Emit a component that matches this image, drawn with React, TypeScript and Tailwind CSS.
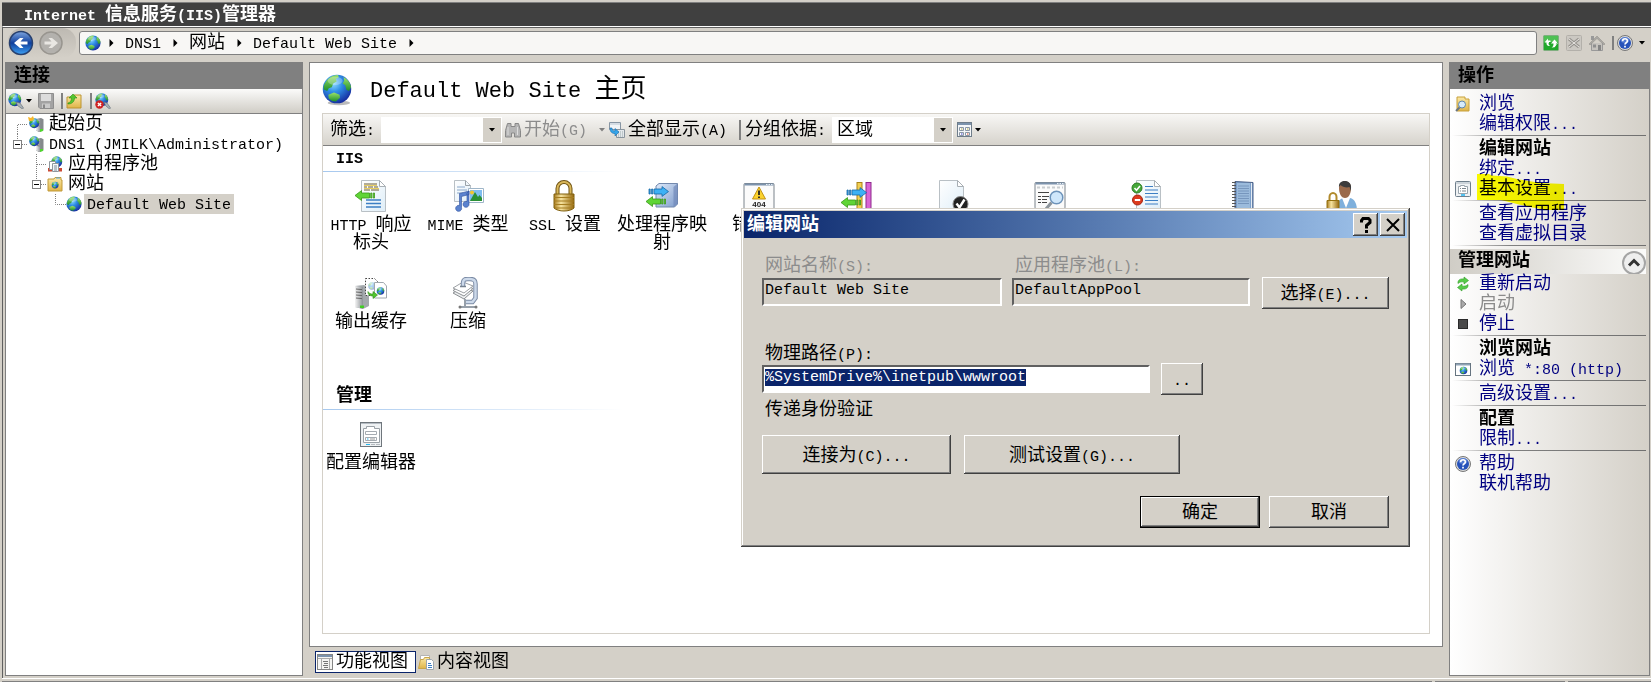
import { useEffect, useRef } from "react";
import type { ReactNode } from "react";

// Latin runs are set smaller than the Chinese so that two letters take one ideograph
function T({ children, big }: { children: string; big?: boolean }) {
  const parts = children.split(/([\x20-\x7e]+)/).filter(Boolean);
  return (
    <>
      {parts.map((p, i) =>
        /^[\x20-\x7e]/.test(p) ? (
          <span key={i} className={big ? "text-[22px] leading-none" : "text-[15px] leading-none"}>{p}</span>
        ) : (
          p
        )
      )}
    </>
  );
}

function Defs() {
  return (
    <svg className="absolute size-0" aria-hidden="true">
      <defs>
        <radialGradient id="sea" cx="0.38" cy="0.3" r="0.75">
          <stop offset="0" stopColor="#8fdcff" />
          <stop offset="0.4" stopColor="#2f8fe6" />
          <stop offset="1" stopColor="#14279b" />
        </radialGradient>
        <linearGradient id="land" x1="0" y1="0" x2="0" y2="1">
          <stop offset="0" stopColor="#9be36a" />
          <stop offset="1" stopColor="#1e8f2c" />
        </linearGradient>
        <linearGradient id="gold" x1="0" y1="0" x2="1" y2="0">
          <stop offset="0" stopColor="#a77a1c" />
          <stop offset="0.35" stopColor="#f7e4a0" />
          <stop offset="1" stopColor="#96690f" />
        </linearGradient>
        <linearGradient id="paper" x1="0" y1="0" x2="1" y2="1">
          <stop offset="0" stopColor="#ffffff" />
          <stop offset="1" stopColor="#dfeef8" />
        </linearGradient>
        <linearGradient id="navy" x1="0" y1="0" x2="0" y2="1">
          <stop offset="0" stopColor="#7fa6e0" />
          <stop offset="0.5" stopColor="#0f3f9c" />
          <stop offset="1" stopColor="#3ea2f5" />
        </linearGradient>
        <linearGradient id="steel" x1="0" y1="0" x2="1" y2="0">
          <stop offset="0" stopColor="#f4f4f4" />
          <stop offset="1" stopColor="#8d9296" />
        </linearGradient>
        <linearGradient id="glass" x1="0" y1="0" x2="1" y2="1">
          <stop offset="0" stopColor="#dfeafa" />
          <stop offset="1" stopColor="#7f9ccb" />
        </linearGradient>
        <linearGradient id="folder" x1="0" y1="0" x2="0" y2="1">
          <stop offset="0" stopColor="#fbe9a6" />
          <stop offset="1" stopColor="#dfb447" />
        </linearGradient>
      </defs>
    </svg>
  );
}

function GlobeShape({ x = 0, y = 0, s = 1 }: { x?: number; y?: number; s?: number }) {
  return (
    <g transform={`translate(${x} ${y}) scale(${s})`}>
      <circle cx="8" cy="8" r="7.6" fill="url(#sea)" />
      <path d="M2 4.2C3.6 1.8 6 .6 8.400 .5L9 1.600 7.400 2.600 7.800 4 6 5 5.200 7 3.600 7.600 2.800 9 1 8.200C.6 6.800 1.100 5.400 2 4.200Z" fill="url(#land)" />
      <path d="M11.500 1.600C13.600 2.800 15.200 4.600 15.500 7L14.400 9 13 8.400 12.400 6 11 5 11.800 3.600Z" fill="url(#land)" />
      <path d="M3.400 11 6.400 9.800 9.400 11 9.600 12.600 7.400 14.600 5.400 14.400 3.600 13Z" fill="url(#land)" />
      <ellipse cx="7" cy="3.600" rx="4" ry="2.200" fill="#fff" opacity="0.28" />
    </g>
  );
}

function Svg({ size = 16, children }: { size?: 16 | 32; children: ReactNode }) {
  return (
    <svg viewBox={`0 0 ${size} ${size}`} className={size === 16 ? "size-4 shrink-0" : "size-8 shrink-0"} aria-hidden="true">
      {children}
    </svg>
  );
}

const Globe = () => <Svg><GlobeShape /></Svg>;

function Caret({ dim }: { dim?: boolean }) {
  return (
    <svg viewBox="0 0 6 4" className="h-1 w-1.5 shrink-0" aria-hidden="true">
      <path d="M0 0h6L3 3.500Z" fill={dim ? "#808080" : "#000"} />
    </svg>
  );
}

function ServerShape() {
  return (
    <g>
      <path d="M8 3l5-1 2.500 1.200v11.300L11 16 8 14.600Z" fill="#85898c" />
      <path d="M8 3l4.400.8V16L8 14.600Z" fill="url(#steel)" />
      <path d="M8.800 5.500l2.800.5M8.800 7.500l2.800.5M8.800 9.500l2.800.5" stroke="#666" strokeWidth="0.800" />
      <path d="M12 13h3v2l-3 1Z" fill="#4fd52c" />
    </g>
  );
}

function StartIcon() {
  return (
    <Svg>
      <ServerShape />
      <GlobeShape x={1} y={2} s={0.65} />
      <path d="M0 1l3 1 2-2 1 3-2 2H1Z" fill="#f7b62a" />
    </Svg>
  );
}

function ServerIcon() {
  return (
    <Svg>
      <ServerShape />
      <GlobeShape x={1} y={0} s={0.65} />
    </Svg>
  );
}

function PoolIcon() {
  return (
    <Svg>
      <GlobeShape x={4} y={0} s={0.72} />
      <path d="M1 12h4v3.500H1zM12 12h3v3.500h-3z" fill="#c94a35" />
      <path d="M2.500 5.500h6v8h-6z" fill="#fff" stroke="#8f979d" />
      <path d="M5.500 7.500h6v8h-6z" fill="#f4f7fa" stroke="#8f979d" />
      <path d="M7 10h3M7 12h3M7 14h3" stroke="#7b8a99" />
    </Svg>
  );
}

function SitesIcon() {
  return (
    <Svg>
      <path d="M1 3h6l1-1.500h6V4h1v11H1Z" fill="url(#folder)" stroke="#c19a3b" />
      <path d="M9 2h4" stroke="#58a6dc" />
      <GlobeShape x={4.500} y={5.500} s={0.45} />
    </Svg>
  );
}

function ConnectIcon() {
  return (
    <Svg>
      <GlobeShape s={0.85} />
      <path d="M8 9l4 1 3.500 5-1 1-5-3.500Z" fill="#a9b2b8" stroke="#69737b" strokeWidth="0.700" />
    </Svg>
  );
}

function DisconnectIcon() {
  return (
    <Svg>
      <GlobeShape s={0.85} />
      <path d="M9 9l3 1 3.500 5-1 1-4-3.500Z" fill="#a9b2b8" stroke="#69737b" strokeWidth="0.700" />
      <circle cx="4.500" cy="11.500" r="4.200" fill="#cf2222" />
      <path d="M2.900 9.900l3.200 3.200M6.100 9.900l-3.200 3.200" stroke="#fff" strokeWidth="1.400" />
    </Svg>
  );
}

function SaveIcon() {
  return (
    <Svg>
      <path d="M.5.5h15v15H2l-1.500-1.500Z" fill="#a3a3a3" stroke="#8e8e8e" />
      <path d="M3 1h10v7H3z" fill="#dcdcdc" />
      <path d="M4 10.500h8V15H4z" fill="#c9c9c9" />
      <path d="M5 11.500h2V15H5z" fill="#888" />
    </Svg>
  );
}

function UpIcon() {
  return (
    <Svg>
      <path d="M1 4h6l1-2h7v13H1Z" fill="url(#folder)" stroke="#bd9430" />
      <path d="M2 10c2-.5 3.500-2 3.500-5H3L7 1l4 4H8.500c0 4-3 6-6.500 6Z" fill="#55c52f" stroke="#2c8d15" strokeWidth="0.600" />
    </Svg>
  );
}

function ArrowBlue({ x, y }: { x: number; y: number }) {
  return (
    <g transform={`translate(${x} ${y})`} stroke="#1667a5" strokeWidth="0.800">
      <path d="M0 3h1.200v5H0zM2.600 3h1.200v5H2.600z" fill="#3aa6ee" />
      <path d="M5 3h8V.6l6.500 5L13 10.400V8H5z" fill="#3db1f5" />
    </g>
  );
}

function ArrowGreen({ x, y }: { x: number; y: number }) {
  return (
    <g transform={`translate(${x} ${y})`} stroke="#3a9718" strokeWidth="0.800">
      <path d="M19.500 3h-1.200v5h1.200zM16.900 3h-1.200v5h1.200z" fill="#6fdc3f" />
      <path d="M14.500 3h-8V.6L0 5.500l6.500 5V8h8z" fill="#5fd536" />
    </g>
  );
}

function Sheet({ x = 7 }: { x?: number }) {
  return (
    <g transform={`translate(${x} 0)`}>
      <path d="M.5.5h18l6 6v25H.5z" fill="url(#paper)" stroke="#b9c0c5" />
      <path d="M18.500.5v6h6z" fill="#fff" stroke="#a8afb4" />
    </g>
  );
}

function HeadersIcon() {
  return (
    <Svg size={32}>
      <Sheet x={6} />
      <path d="M9 5.500h13M9 8.500h15" stroke="#e8cf62" />
      <path d="M9 4h13M9 7h3m1 0h5m1 0h4M9 10h6m1 0h8" stroke="#6a5c34" />
      <path d="M11 20h15M11 23.500h15M11 27h15" stroke="#3c7fc4" strokeWidth="1.400" />
      <ArrowGreen x={0} y={10} />
    </Svg>
  );
}

function MimeIcon() {
  return (
    <Svg size={32}>
      <path d="M2.500.5h11l5 5v16h-16z" fill="url(#paper)" stroke="#b9c0c5" />
      <path d="M13.500.5v5h5" fill="none" stroke="#9aa2a8" />
      <path d="M5 7h8M5 10h10M5 13h6" stroke="#8aa7c8" />
      <path d="M16.500 8.500h15v14h-15z" fill="#fff" stroke="#9fb6c9" />
      <path d="M18 10h12v11H18z" fill="#7fbdf0" />
      <path d="M18 21l5-9 3 5 1.500-2L30 18v3z" fill="#2a9135" />
      <circle cx="20" cy="12.500" r="2" fill="#f0c52f" />
      <path d="M7.500 13.500L17 11v3.500l-7.500 2v11a3 3 0 1 1-2-2zM17 11v13a3 3 0 1 1-2-2.500V13z" fill="#5b83cf" stroke="#2d4f9e" strokeWidth="0.600" />
    </Svg>
  );
}

function LockShape() {
  return (
    <g>
      <path d="M8.500 14V8.500a6.500 6.500 0 0 1 13 0V14" fill="none" stroke="#6f5212" strokeWidth="4" />
      <path d="M8.500 14V8.500a6.500 6.500 0 0 1 13 0V14" fill="none" stroke="#d9b75a" strokeWidth="2" />
      <path d="M5 14h20v14c-4 4-16 4-20 0z" fill="url(#gold)" stroke="#80600f" />
      <path d="M5 17.500h20M5 21h20M5 24.500h20M6 28h18" stroke="#a57d20" />
    </g>
  );
}

function HandlerIcon() {
  return (
    <Svg size={32}>
      <path d="M10 6l3-2.500h18.500V24l-3 3H10z" fill="url(#glass)" stroke="#7389ad" />
      <path d="M27.500 7l4-3.500V24l-4 3z" fill="#7189b9" opacity="0.700" />
      <ArrowBlue x={3} y={6} />
      <ArrowGreen x={0} y={16} />
    </Svg>
  );
}

function WindowFrame() {
  return (
    <g>
      <rect x="1" y="3.500" width="30" height="26" rx="1" fill="#fbfbfb" stroke="#7a838b" />
      <path d="M1.500 4.500h29" stroke="#7c93ad" strokeWidth="2" />
      <path d="M23 4.500h1.500m1 0h1.500m1 0h1.500" stroke="#e7eef5" />
    </g>
  );
}

function ErrorPagesIcon() {
  return (
    <Svg size={32}>
      <WindowFrame />
      <path d="M16 7l6.500 12H9.500z" fill="#fbd22c" stroke="#c19214" strokeLinejoin="round" />
      <path d="M16 10.500v4.500M16 16.500v1.500" stroke="#222" strokeWidth="1.800" />
      <text x="16" y="26.500" textAnchor="middle" fontSize="8" fontFamily="Liberation Sans" fontWeight="bold" fill="#222">404</text>
    </Svg>
  );
}

function ModulesIcon() {
  return (
    <Svg size={32}>
      <rect x="17" y="2.500" width="5" height="29" fill="#f3cf51" stroke="#a9841a" />
      <rect x="26" y="2.500" width="5" height="29" fill="#d964d5" stroke="#8e2a8c" />
      <ArrowBlue x={7} y={7} />
      <ArrowGreen x={1} y={17} />
    </Svg>
  );
}

function DefaultDocIcon() {
  return (
    <Svg size={32}>
      <Sheet x={2} />
      <circle cx="23.500" cy="24" r="7.500" fill="#222" stroke="#888" />
      <path d="M19.500 23.500l3 4 5-8" fill="none" stroke="#fff" strokeWidth="2.400" />
    </Svg>
  );
}

function BrowseIcon() {
  return (
    <Svg size={32}>
      <g transform="translate(0 -1)">
        <WindowFrame />
        <path d="M3 8.500h26" stroke="#c9cdd0" strokeDasharray="3 2" strokeWidth="2" />
        <path d="M4 13.500h11M4 17.500h3m1 0h7M4 20.500h3m1 0h5M4 23.500h3m1 0h5" stroke="#444" />
        <path d="M17.500 23.500l-6 7" stroke="#8d959c" strokeWidth="3" />
        <circle cx="22.500" cy="18.500" r="6.300" fill="#cfe7fb" stroke="#6d93ba" strokeWidth="1.500" />
      </g>
    </Svg>
  );
}

function RequestFilterIcon() {
  return (
    <Svg size={32}>
      <Sheet x={5} />
      <path d="M14 6.500h8M14 10h13M14 13.500h13M14 17h13M14 20.500h13M14 24h13" stroke="#3c7fc4" />
      <circle cx="6" cy="8" r="5" fill="#46a83a" stroke="#2b7a22" />
      <path d="M3.500 8l2 2.200L9 6" fill="none" stroke="#fff" strokeWidth="1.600" />
      <circle cx="6.500" cy="20" r="5" fill="#dd3a1d" stroke="#a52410" />
      <path d="M3.800 20h5.400" stroke="#fff" strokeWidth="2" />
    </Svg>
  );
}

function LogIcon() {
  return (
    <Svg size={32}>
      <path d="M7 1.500l18 1V31H7z" fill="#7c9fc9" stroke="#4a6188" />
      <path d="M9 3h13v28H9z" fill="#9bbbdc" />
      <path d="M10 6h11M10 8.500h11M10 11h11M10 13.500h11M10 16h11M10 18.500h11M10 21h11M10 23.500h11" stroke="#7696bd" />
      <path d="M23.500 3v28" stroke="#e4ecf5" />
      <path d="M6 2v29" stroke="#555" strokeWidth="4" strokeDasharray="1 2" />
    </Svg>
  );
}

function AuthIcon() {
  return (
    <Svg size={32}>
      <path d="M11 32c0-8 2-13 8-14h6c5 1 7 6 7 14z" fill="#7fb0dc" />
      <path d="M17 18l4 10 4-10z" fill="#fff" />
      <path d="M14 8c0-8 12-9 12 0 0 5-2 10-6 10s-6-5-6-10z" fill="#9a6a4b" />
      <path d="M14 7c-1-8 13-8 12 1v3l-1.500-4c-3 1-7 0-9-2z" fill="#3c3c3c" />
      <path d="M4.500 21v-4a3.500 4 0 0 1 7 0v4" fill="none" stroke="#b18a2c" strokeWidth="2" />
      <path d="M2 20.500h12v10H2z" fill="url(#gold)" stroke="#94700f" />
    </Svg>
  );
}

function CacheIcon() {
  return (
    <Svg size={32}>
      <path d="M0 9l9-1 5 3v18l-6 3-8-2z" fill="#a3a8ac" />
      <path d="M0 9l8 1v22l-8-2z" fill="url(#steel)" />
      <path d="M1 12l6 .6M1 15l6 .6M1 18l6 .6M1 21l6 .6" stroke="#666" />
      <path d="M5 28.500h4v2.500H5z" fill="#43cd25" />
      <path d="M10.500 1.500h9l4 4v13h-13z" fill="#fff" stroke="#444" strokeDasharray="1.500 1.500" />
      <g opacity="0.400"><GlobeShape x={13} y={5} s={0.5} /></g>
      <path d="M19.500 5.500h9l3 3.500v12h-12z" fill="#fff" stroke="#a1a8ae" />
      <GlobeShape x={21.500} y={10} s={0.5} />
      <path d="M13 14.500c1 2 2.500 2.500 5 2.500v-2.500l4.500 3.500-4.500 3.500V19c-3 0-5.500-1.500-5-4.500z" fill="#52c52f" stroke="#318f18" strokeWidth="0.600" />
    </Svg>
  );
}

function CompressIcon() {
  return (
    <Svg size={32}>
      <path d="M1 16l10-6 10 4-9 8z" fill="#eef0f1" stroke="#8b8f93" />
      <path d="M1 13.500l10-6 10 4-9 7.500z" fill="#fff" stroke="#8b8f93" />
      <path d="M1 11l10-6 10 4-9 7z" fill="#fff" stroke="#9ca0a4" />
      <path d="M11 9V6.500C11 1 15 2 18 2c4 0 5.500 1.500 5.500 5v14l-3 4H14" fill="none" stroke="#7b8ba5" strokeWidth="4.500" />
      <path d="M11 9V6.500C11 1 15 2 18 2c4 0 5.500 1.500 5.500 5v14l-3 4H14" fill="none" stroke="#ccd9ea" strokeWidth="2.500" />
      <path d="M8 9.500h6" stroke="#75818f" strokeWidth="1.500" />
      <path d="M13 22v7M7 30h18" stroke="#75818f" strokeWidth="1.500" />
      <circle cx="8" cy="30" r="1.500" fill="#777" />
      <circle cx="24" cy="30" r="1.500" fill="#777" />
    </Svg>
  );
}

function FormShape() {
  return (
    <g>
      <rect x="5.500" y="4.500" width="21" height="24" fill="#eef1f3" stroke="#6f767c" />
      <path d="M6 5.500h20" stroke="#b5bcc3" />
      <path d="M8.500 10.500h3v-2h8v2h5v14h-16z" fill="#fff" stroke="#9aa1a7" />
      <path d="M10.500 13.500h11v3h-11zM10.500 19.500h11v3h-11z" fill="#fff" stroke="#a5abb1" />
      <path d="M12 21h1.500" stroke="#27a8e0" />
      <path d="M15 21h5" stroke="#999" />
      <path d="M11 26.500h4" stroke="#27b5ea" />
      <path d="M16 26.500h4m1 0h4" stroke="#b5babf" />
    </g>
  );
}

function SettingsIcon() {
  return (
    <Svg>
      <rect x="0.500" y="0.500" width="15" height="15" rx="1" fill="#eef1f3" stroke="#6f7f8c" />
      <path d="M1 2h14" stroke="#a9b6c0" />
      <path d="M3.500 5.500h2v-1h4v1h3v7h-9z" fill="#fff" stroke="#9aa5ad" />
      <path d="M5 7.500h1M7 7.500h4M5 10h1M7 10h4" stroke="#7b858d" />
      <path d="M6 14h4" stroke="#1fb1ee" strokeWidth="1.500" />
    </Svg>
  );
}

function HelpIcon() {
  return (
    <Svg>
      <circle cx="8" cy="8" r="7.500" fill="#dcdcdc" stroke="#777" />
      <circle cx="8" cy="8" r="6" fill="#2652ba" />
      <ellipse cx="8" cy="5" rx="4.500" ry="3" fill="#7ea2ea" opacity="0.500" />
      <path d="M5.600 6.200C5.600 3 10.600 3 10.400 6c0 1.600-2.400 1.800-2.400 3.400M8 10.700v1.800" fill="none" stroke="#fff" strokeWidth="1.700" />
    </Svg>
  );
}

function ExploreIcon() {
  return (
    <Svg>
      <path d="M2 1h8v2h4v12H2z" fill="url(#folder)" stroke="#c7a03a" />
      <path d="M5 11l-4 4" stroke="#6b7680" strokeWidth="2" />
      <circle cx="7" cy="8.500" r="3.500" fill="#d7ecfb" stroke="#5e86ad" />
    </Svg>
  );
}

function RestartIcon() {
  return (
    <Svg>
      <path d="M3 7.500c-.500-4 3-5 6-4.500V1l4.500 3.500L9 8V6C6.500 5.500 4.500 6 3 7.500z" fill="#57cb48" stroke="#2f9a26" strokeWidth="0.600" />
      <path d="M13 8.500c.500 4-3 5-6 4.500v2l-4.500-3.500L7 8v2c2.500.500 4.500 0 6-1.500z" fill="#57cb48" stroke="#2f9a26" strokeWidth="0.600" />
    </Svg>
  );
}

function PlayIcon() {
  return <Svg><path d="M6 3.500v9l5-4.500z" fill="#aaa" stroke="#777" /></Svg>;
}

function StopIcon() {
  return <Svg><rect x="3.500" y="3.500" width="9" height="9" fill="#4a4a4a" stroke="#2a2a2a" /></Svg>;
}

function WebWindowIcon() {
  return (
    <Svg>
      <rect x="0.500" y="2.500" width="15" height="12" fill="#fff" stroke="#667480" />
      <path d="M1 3.500h14" stroke="#8fa3b5" strokeWidth="2" />
      <GlobeShape x={4.500} y={5.500} s={0.5} />
    </Svg>
  );
}

function FeatureTabIcon() {
  return (
    <Svg>
      <rect x="0.500" y="0.500" width="15" height="15" fill="#f5f5f3" stroke="#858585" />
      <path d="M1 2h14" stroke="#7c93ad" strokeWidth="2" />
      <path d="M1 4.500h14M4.500 5v10M12.500 5v10" stroke="#aaa" />
      <path d="M6 7.500h5M7 9.500h4M6 11.500h5M7 13.500h4" stroke="#777" />
    </Svg>
  );
}

function ContentTabIcon() {
  return (
    <Svg>
      <path d="M2.500 1.500h9v5h-9z" fill="#fff" stroke="#b4b4b4" />
      <path d="M.500 14.500l2-9h3l1-2h5v11z" fill="url(#folder)" stroke="#c9a449" />
      <path d="M8.500 5.500h5l2 2v8h-7z" fill="#fff" stroke="#9ca5ad" />
      <path d="M10 9.500h3M10 11.500h4M10 13.500h4" stroke="#3c7fc4" />
    </Svg>
  );
}

function BinocularsIcon() {
  return (
    <Svg>
      <path d="M2.500 1.500h3.500v3h4v-3h3.500l2 7v6.500h-6v-4h-3v4h-6V8.500z" fill="#b5b5b5" stroke="#888" />
      <path d="M3 5v8M12.500 5v8" stroke="#ddd" />
    </Svg>
  );
}

function ShowAllIcon() {
  return (
    <Svg>
      <path d="M.5.5h11v7H.5z" fill="#f1f4f7" stroke="#8795a3" />
      <path d="M1 2h10" stroke="#b7c3cf" />
      <path d="M7.500 7.500h8v8h-8z" fill="#e4e8ec" stroke="#8a949d" />
      <path d="M9 10h5M9 12h5M9 14h5" stroke="#9aa" strokeDasharray="1 1" />
      <path d="M1 6c0 4 2 5.500 5 5.500V14l4-4-4-3.500V9C4 9 3 8 3 6z" fill="#36a5ea" stroke="#1a6cab" strokeWidth="0.600" />
    </Svg>
  );
}

function ViewModeIcon() {
  return (
    <Svg>
      <rect x="0.500" y="0.500" width="14" height="14" fill="#f5f7f9" stroke="#6f7d8a" />
      <path d="M1 2h13" stroke="#7c93ad" strokeWidth="2" />
      <path d="M2.500 5.500h4v3h-4zM8.500 5.500h4v3h-4zM2.500 10.500h4v3h-4zM8.500 10.500h4v3h-4z" fill="#fff" stroke="#8a97a5" />
      <path d="M4 7h1.500M10 7h1.500" stroke="#a5a13a" />
      <path d="M4 12h1.500" stroke="#3535c8" />
      <path d="M10 12h1.500" stroke="#d2452b" />
    </Svg>
  );
}

type Guide = "top" | "box" | "mid" | "end";

// dotted branch lines and the minus box in front of a tree node
function TreeGuide({ kind }: { kind: Guide }) {
  return (
    <svg viewBox="0 0 15 20" className="h-5 w-[15px] shrink-0" aria-hidden="true">
      <g stroke="#808080" strokeDasharray="1 1" fill="none">
        {kind === "top" && <path d="M4.500 20V10.500H15" />}
        {kind === "mid" && <path d="M4.500 0V20M5 10.500H15" />}
        {kind === "end" && <path d="M4.500 0V10.500H15" />}
        {kind === "box" && <path d="M4.500 0V6M9 10.500H15" />}
      </g>
      {kind === "box" && (
        <>
          <rect x="0.500" y="6.500" width="8" height="8" fill="#fff" stroke="#808080" />
          <path d="M2 10.500h5" stroke="#000" />
        </>
      )}
    </svg>
  );
}

const tree: { label: string; pad: string; guide: Guide; icon: ReactNode; on?: boolean }[] = [
  { label: "起始页", pad: "pl-[7px]", guide: "top", icon: <StartIcon /> },
  { label: "DNS1 (JMILK\\Administrator)", pad: "pl-[7px]", guide: "box", icon: <ServerIcon /> },
  { label: "应用程序池", pad: "pl-[26px]", guide: "mid", icon: <PoolIcon /> },
  { label: "网站", pad: "pl-[26px]", guide: "box", icon: <SitesIcon /> },
  { label: "Default Web Site", pad: "pl-[45px]", guide: "end", icon: <Globe />, on: true },
];

const iisFeatures: [string, ReactNode][] = [
  ["HTTP 响应标头", <HeadersIcon />],
  ["MIME 类型", <MimeIcon />],
  ["SSL 设置", <Svg size={32}><LockShape /></Svg>],
  ["处理程序映射", <HandlerIcon />],
  ["错误页", <ErrorPagesIcon />],
  ["模块", <ModulesIcon />],
  ["默认文档", <DefaultDocIcon />],
  ["目录浏览", <BrowseIcon />],
  ["请求筛选", <RequestFilterIcon />],
  ["日志", <LogIcon />],
  ["身份验证", <AuthIcon />],
  ["输出缓存", <CacheIcon />],
  ["压缩", <CompressIcon />],
];

const manageFeatures: [string, ReactNode][] = [["配置编辑器", <Svg size={32}><FormShape /></Svg>]];

function FeatureGroup({ title, items }: { title: string; items: [string, ReactNode][] }) {
  return (
    <section className="mb-2.5">
      <h2 className="h-[25px] pl-[13px] font-bold leading-6"><T>{title}</T></h2>
      <div className="h-px w-[300px] bg-linear-to-r from-[#a6c8ee] to-white" />
      <ul className="flex flex-wrap pt-2">
        {items.map(([label, icon]) => (
          <li key={label} className="h-[97px] w-[97px]">
            <button className="flex w-24 flex-col items-center">
              {icon}
              <span className="mt-1 w-[92px] leading-[18px]"><T>{label}</T></span>
            </button>
          </li>
        ))}
      </ul>
    </section>
  );
}

function Action({ icon, children, dim }: { icon?: ReactNode; children: string; dim?: boolean }) {
  return (
    <li className="flex h-5 items-center gap-2 pl-[5px]">
      <span className="size-4 shrink-0">{icon}</span>
      {dim ? (
        <span className="leading-5 text-[#8c8c8c]"><T>{children}</T></span>
      ) : (
        <a href="#" className="leading-5 text-[#000080]"><T>{children}</T></a>
      )}
    </li>
  );
}

function ActionTitle({ children }: { children: string }) {
  return <li className="h-5 pl-[29px] font-bold leading-5">{children}</li>;
}

function Rule() {
  return <li className="mr-[3px] ml-0.5 h-[5px] pt-px"><div className="h-px bg-linear-to-r from-transparent via-[#808080] via-30% to-[#707070]" /></li>;
}

function Header({ children }: { children: string }) {
  return <h2 className="h-[27px] shrink-0 bg-[#808080] pl-2 font-bold leading-[29px]">{children}</h2>;
}

function Divider() {
  return <span className="h-5 w-0.5 shrink-0 bg-[#808080]" />;
}

function Push({ children, className = "", onClick }: { children: string; className?: string; onClick?: () => void }) {
  return (
    <button
      onClick={onClick}
      className={`bg-[#d4d0c8] pt-0.5 shadow-[inset_-1px_-1px_0_#404040,inset_1px_1px_0_#fff,inset_-2px_-2px_0_#808080] ${className}`}
    >
      <T>{children}</T>
    </button>
  );
}

const sunken =
  "h-7 w-full border-2 border-t-[#606060] border-l-[#606060] border-r-white border-b-white px-px pb-1 text-[15px] leading-[18px] outline-none";

function EditSiteDialog() {
  const path = useRef<HTMLInputElement>(null);

  useEffect(() => {
    path.current?.focus();
    path.current?.select();
  }, []);

  return (
    <div
      role="dialog"
      aria-labelledby="dlg-title"
      className="absolute top-[208px] left-[741px] w-[669px] bg-[#d4d0c8] p-[3px] shadow-[inset_-1px_-1px_0_#404040,inset_1px_1px_0_#d4d0c8,inset_-2px_-2px_0_#808080,inset_2px_2px_0_#fff]"
    >
      <div className="flex h-[27px] items-center bg-linear-to-r from-[#0a246a] to-[#a6caf0] pr-0.5 pl-[3px]">
        <h2 id="dlg-title" className="flex-1 font-bold leading-6 text-white">编辑网站</h2>
        <button aria-label="帮助" className="flex h-[23px] w-[25px] items-center justify-center bg-[#d4d0c8] shadow-[inset_-1px_-1px_0_#404040,inset_1px_1px_0_#fff,inset_-2px_-2px_0_#808080]">
          <svg viewBox="0 0 16 18" className="h-[18px] w-4" fill="none" stroke="#000" strokeWidth="3">
            <path d="M3.500 6.500V4.500L5 2.500h5.500L12 4v2.500L8.500 9.500v3M8.500 14v3" />
          </svg>
        </button>
        <button aria-label="关闭" className="ml-0.5 flex h-[23px] w-[25px] items-center justify-center bg-[#d4d0c8] shadow-[inset_-1px_-1px_0_#404040,inset_1px_1px_0_#fff,inset_-2px_-2px_0_#808080]">
          <svg viewBox="0 0 14 14" className="size-3.5" fill="none" stroke="#000" strokeWidth="2">
            <path d="M1 1l12 12M13 1L1 13" />
          </svg>
        </button>
      </div>
      <div className="flex flex-col px-[18px] pt-4 pb-4">
        <div className="flex">
          <div className="w-60">
            <label htmlFor="site" className="block h-6 pl-[3px] leading-6 text-[#8c8c8c]"><T>网站名称(S):</T></label>
            <input id="site" readOnly value="Default Web Site" className={`${sunken} bg-[#d4d0c8]`} />
          </div>
          <div className="ml-2.5 w-[238px]">
            <label htmlFor="pool" className="block h-6 pl-[3px] leading-6 text-[#8c8c8c]"><T>应用程序池(L):</T></label>
            <input id="pool" readOnly value="DefaultAppPool" className={`${sunken} bg-[#d4d0c8]`} />
          </div>
          <Push className="mt-[23px] ml-3 h-8 w-[127px]">选择(E)...</Push>
        </div>
        <label htmlFor="path" className="mt-[33px] block h-[21px] pl-[3px] leading-6"><T>物理路径(P):</T></label>
        <div className="flex items-center">
          <div className="w-[388px]">
            <input
              id="path"
              ref={path}
              defaultValue="%SystemDrive%\inetpub\wwwroot"
              className={`${sunken} bg-white selection:bg-[#0a246a] selection:text-white`}
            />
          </div>
          <Push className="ml-[11px] h-8 w-[42px]">..</Push>
        </div>
        <p className="mt-1 h-5 pl-[3px] leading-[22px]">传递身份验证</p>
        <div className="mt-4 flex gap-[13px]">
          <Push className="h-[39px] w-[189px]">连接为(C)...</Push>
          <Push className="h-[39px] w-[216px]">测试设置(G)...</Push>
        </div>
        <div className="mt-[22px] flex justify-end gap-[9px]">
          <div className="bg-black p-px">
            <Push className="block h-[30px] w-[118px]">确定</Push>
          </div>
          <Push className="h-8 w-[120px]">取消</Push>
        </div>
      </div>
    </div>
  );
}

function Crumb({ children }: { children: string }) {
  return (
    <>
      <button className="leading-5"><T>{children}</T></button>
      <svg viewBox="0 0 4 8" className="mr-[11px] ml-3 h-2 w-[5px] shrink-0" aria-hidden="true"><path d="M0 0v8l4-4z" /></svg>
    </>
  );
}

export default function App() {
  return (
    <div className="relative flex min-h-screen flex-col bg-[#d4d0c8] pt-0.5 pl-0.5 font-['Liberation_Mono','Noto_Sans_CJK_SC',monospace] text-[18px] leading-5 text-black">
      <Defs />
      <div className="h-6 border-t border-[#808080] bg-[#404040] pl-[22px] font-bold leading-6 text-white">
        <T>Internet 信息服务(IIS)管理器</T>
      </div>
      <div className="flex flex-1 flex-col border-t border-l border-l-[#606060] border-t-white">
        <nav className="flex h-[35px] items-center border-t border-[#606060] pr-1.5 pb-1 pl-[5px]">
          <div className="mr-[3px] flex h-[30px] w-[68px] shrink-0 items-center gap-1 rounded-[14px] bg-linear-to-b from-[#bdb9b2] to-[#d4d0c8]">
            <button aria-label="后退">
              <svg viewBox="0 0 26 26" className="size-[26px]">
                <circle cx="13" cy="13" r="11.500" fill="url(#navy)" stroke="#27406f" strokeWidth="1.500" />
                <path d="M19.500 11.500h-7L15.500 8H12l-6 5 6 5h3.500l-3-3.500h7z" fill="#fff" />
              </svg>
            </button>
            <button aria-label="前进">
              <svg viewBox="0 0 26 26" className="size-[26px]">
                <circle cx="13" cy="13" r="11" fill="#b3b1ad" stroke="#98958f" strokeWidth="1.500" />
                <path d="M6.500 11.500h7L10.500 8H14l6 5-6 5h-3.500l3-3.500h-7z" fill="#e9e7e3" />
              </svg>
            </button>
          </div>
          <div className="flex h-6 flex-1 items-center rounded-[3px] border border-[#808080] bg-[#f8f7f5] pl-[5px]">
            <Globe />
            <svg viewBox="0 0 4 8" className="mr-[11px] ml-2 h-2 w-[5px] shrink-0" aria-hidden="true"><path d="M0 0v8l4-4z" /></svg>
            <Crumb>DNS1</Crumb>
            <Crumb>网站</Crumb>
            <Crumb>Default Web Site</Crumb>
          </div>
          <div className="flex items-center pl-1.5">
            <button aria-label="刷新">
              <Svg>
                <rect x="0.500" y="0.500" width="15" height="15" rx="1" fill="#21a82b" stroke="#7fae7f" />
                <path d="M1 1h14v6H1z" fill="#7bd77c" opacity="0.500" />
                <path d="M1.500 7.500L5 3.500v2h2.500V7H6v.500L5.500 8.500c0 1.500 1 2 2 2-2 1-4 0-4-2v-1zM14.500 8.500L11 12.500v-2" fill="#fff" />
                <path d="M8 8.500l3.500-4 3.500 4h-2c0 3-1.500 4.500-4.500 4 1.500-.500 2-2 2-4z" fill="#fff" />
              </Svg>
            </button>
            <button aria-label="停止" className="ml-[7px]">
              <Svg>
                <rect x="0.500" y="0.500" width="15" height="15" rx="1" fill="#cbc8c2" stroke="#b3b0aa" />
                <path d="M3 4l10 8M13 4L3 12" stroke="#97948f" strokeWidth="3" />
                <path d="M3 4l10 8M13 4L3 12" stroke="#e8e6e2" strokeWidth="1" />
              </Svg>
            </button>
            <button aria-label="主页" className="ml-[7px]">
              <Svg>
                <path d="M2.500 8v7.500h11V8" fill="#c5c2bd" stroke="#999" />
                <path d="M2 1h3v4H2z" fill="#999" />
                <path d="M0 9l8-8 8 8-1 1-7-6.500L1 10z" fill="#aaa8a4" stroke="#8f8c87" strokeWidth="0.500" />
                <path d="M9 10h3v5.500H9z" fill="#858585" />
                <path d="M4 9.500h3v3H4z" fill="#8f8f8f" />
              </Svg>
            </button>
            <span className="mr-[3px] ml-[7px] h-3.5 w-0.5 bg-[#808080]" />
            <button aria-label="帮助" className="flex items-center gap-1.5"><HelpIcon /><Caret /></button>
          </div>
        </nav>

        <div className="flex flex-1 pr-px pb-0.5 pl-0.5">
          <aside className="mr-1.5 flex w-[298px] shrink-0 flex-col border border-t-0 border-[#808080] bg-white">
            <Header>连接</Header>
            <div className="flex h-[25px] items-center border-b border-[#808080] bg-linear-to-b from-[#fbfbfa] to-[#d0cdc6] pl-0.5">
              <button aria-label="连接" className="flex items-center gap-0.5"><ConnectIcon /><Caret /></button>
              <button aria-label="保存" className="mr-[7px] ml-1.5"><SaveIcon /></button>
              <span className="h-4 w-0.5 bg-[#808080]" />
              <button aria-label="向上" className="mr-2 ml-[3px]"><UpIcon /></button>
              <span className="h-4 w-0.5 bg-[#808080]" />
              <button aria-label="断开" className="ml-[3px]"><DisconnectIcon /></button>
            </div>
            <ul>
              {tree.map((n) => (
                <li key={n.label} className={`flex h-5 items-center ${n.pad}`}>
                  <TreeGuide kind={n.guide} />
                  {n.icon}
                  <button className={n.on ? "ml-0.5 h-5 bg-[#d4d0c8] px-[3px] leading-5" : "ml-0.5 h-5 px-[3px] leading-5"}>
                    <T>{n.label}</T>
                  </button>
                </li>
              ))}
            </ul>
          </aside>

          <main className="mr-1.5 flex min-w-0 flex-1 flex-col">
            <div className="flex flex-1 flex-col border border-[#808080] bg-white px-3 pb-3">
              <div className="flex h-[50px] items-center gap-[18px] pt-1">
                <svg viewBox="0 0 16 17" className="h-8 w-[30px]" aria-hidden="true">
                  <ellipse cx="9" cy="15.400" rx="6" ry="1.200" fill="#bbb" />
                  <GlobeShape />
                </svg>
                <h1 className="text-[26px] leading-8"><T big>Default Web Site 主页</T></h1>
              </div>
              <div className="flex-1 border border-[#d4d0c8]">
                <div className="flex h-8 items-center border-b border-[#808080] bg-linear-to-b from-[#f8f7f5] to-[#d6d3cc] pl-[7px]">
                  <label htmlFor="filter"><T>筛选:</T></label>
                  <div className="mr-[3px] ml-1.5 flex h-[26px] w-[121px] bg-white">
                    <input id="filter" className="min-w-0 flex-1 px-1 text-[15px] outline-none" />
                    <button aria-label="筛选历史" className="my-px mr-px flex w-[18px] items-center justify-center bg-[#d4d0c8]"><Caret /></button>
                  </div>
                  <button disabled className="flex items-center gap-[3px] text-[#8c8c8c]"><BinocularsIcon /><span><T>开始(G)</T></span></button>
                  <span className="mr-1 ml-3 flex"><Caret dim /></span>
                  <button className="flex items-center gap-[3px]"><ShowAllIcon /><span><T>全部显示(A)</T></span></button>
                  <span className="mr-1 ml-3 flex"><Divider /></span>
                  <label htmlFor="group"><T>分组依据:</T></label>
                  <div className="ml-1.5 flex h-[26px] w-[121px] items-center bg-white">
                    <select id="group" className="h-full min-w-0 flex-1 appearance-none pl-[5px] leading-5 outline-none">
                      <option>区域</option>
                      <option>类别</option>
                    </select>
                    <span className="mr-px flex h-6 w-[18px] items-center justify-center bg-[#d4d0c8]"><Caret /></span>
                  </div>
                  <button aria-label="视图" className="ml-1 flex items-center gap-0.5"><ViewModeIcon /><Caret /></button>
                </div>
                <FeatureGroup title="IIS" items={iisFeatures} />
                <FeatureGroup title="管理" items={manageFeatures} />
              </div>
            </div>
            <div className="flex h-[29px] items-center pl-1.5">
              <button className="flex h-[22px] items-center gap-[3px] border border-[#0a246a] bg-white pr-[7px] pl-px leading-5"><FeatureTabIcon />功能视图</button>
              <button className="flex h-[22px] items-center gap-[3px] pl-0.5 leading-5"><ContentTabIcon />内容视图</button>
            </div>
          </main>

          <aside className="flex w-[201px] shrink-0 flex-col border border-t-0 border-[#808080] bg-linear-to-r from-white to-[#d4d0c8]">
            <Header>操作</Header>
            <ul className="relative pt-[5px]">
              <Action icon={<ExploreIcon />}>浏览</Action>
              <Action>编辑权限...</Action>
              <Rule />
              <ActionTitle>编辑网站</ActionTitle>
              <Action>绑定...</Action>
              <Action icon={<SettingsIcon />}>基本设置...</Action>
              <Rule />
              <Action>查看应用程序</Action>
              <Action>查看虚拟目录</Action>
              <Rule />
              <svg viewBox="0 0 88 37" className="pointer-events-none absolute top-[85px] left-[27px] h-[37px] w-[88px] mix-blend-multiply" aria-hidden="true">
                <path d="M0 0h12l3 1.500 15 1 12 3 22 3.500 23 1v26H68l-24-5-20-5L0 26z" fill="#ffff00" />
              </svg>
            </ul>
            <div className="mr-[3px] flex h-[25px] justify-between overflow-hidden bg-linear-to-r from-[#d0cdc6] to-[#fbfbfa] pl-2">
              <h3 className="font-bold leading-6">管理网站</h3>
              <button aria-label="折叠" className="h-6 w-6">
                <svg viewBox="0 0 24 24" className="mt-0.5 size-6">
                  <circle cx="12" cy="12" r="11" fill="#eee" stroke="#a5a5a5" strokeWidth="2" />
                  <path d="M7 14.500l5-5 5 5" fill="none" stroke="#333" strokeWidth="3" />
                </svg>
              </button>
            </div>
            <ul>
              <Action icon={<RestartIcon />}>重新启动</Action>
              <Action icon={<PlayIcon />} dim>启动</Action>
              <Action icon={<StopIcon />}>停止</Action>
              <Rule />
              <ActionTitle>浏览网站</ActionTitle>
              <Action icon={<WebWindowIcon />}>浏览 *:80 (http)</Action>
              <Rule />
              <Action>高级设置...</Action>
              <Rule />
              <ActionTitle>配置</ActionTitle>
              <Action>限制...</Action>
              <Rule />
              <Action icon={<HelpIcon />}>帮助</Action>
              <Action>联机帮助</Action>
            </ul>
          </aside>
        </div>
      </div>
      <footer className="flex h-1 gap-[3px] border-t border-white pt-0.5">
        <div className="h-px flex-1 bg-[#808080]" />
        <div className="h-px w-[130px] bg-[#808080]" />
        <div className="h-px w-[83px] bg-[#808080]" />
      </footer>
      <EditSiteDialog />
    </div>
  );
}
